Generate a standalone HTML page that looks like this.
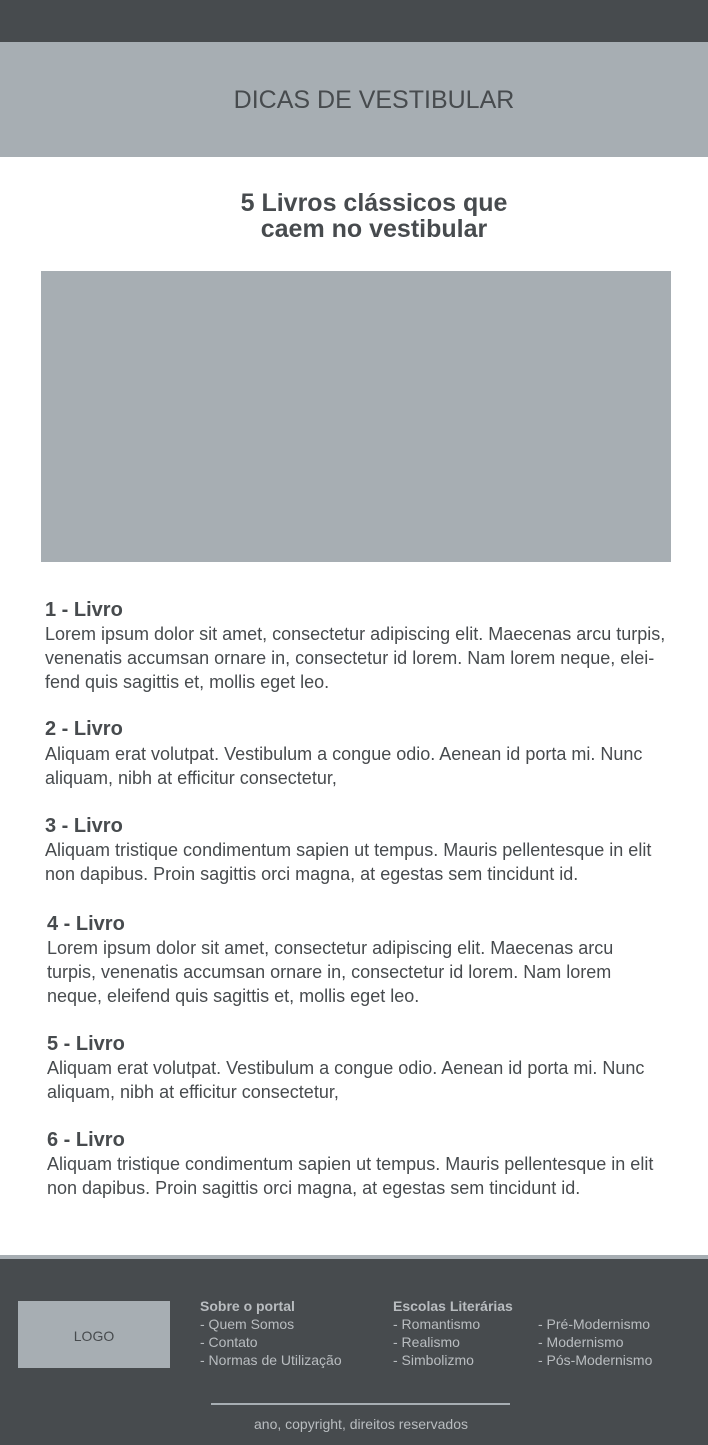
<!DOCTYPE html>
<html><head><meta charset="utf-8"><style>
*{margin:0;padding:0;box-sizing:border-box}
body{width:708px;height:1445px;position:relative;background:#fff;font-family:"Liberation Sans",Arial,sans-serif;color:#474b4e;overflow:hidden}
.a{position:absolute;white-space:nowrap}
.h{font-size:20px;font-weight:bold;line-height:24px}
.p{font-size:18px;line-height:24px}
.f{font-size:14px;line-height:18px;color:#b9bdc0}
.fb{font-weight:bold}
</style></head><body>
<div class="a" style="left:0;top:0;width:708px;height:42px;background:#474b4e"></div>
<div class="a" style="left:0;top:42px;width:708px;height:115px;background:#a7aeb3"></div>
<div class="a" style="left:0;width:748px;top:86px;font-size:25px;line-height:28px;text-align:center">DICAS DE VESTIBULAR</div>
<div class="a" style="left:0;width:748px;top:190px;font-size:25px;font-weight:bold;line-height:26px;text-align:center">5 Livros clássicos que<br>caem no vestibular</div>
<div class="a" style="left:41px;top:271px;width:630px;height:291px;background:#a7aeb3"></div>

<div class="a h" style="left:45px;top:598px">1 - Livro</div>
<div class="a p" style="left:45px;top:622px">Lorem ipsum dolor sit amet, consectetur adipiscing elit. Maecenas arcu turpis,<br>venenatis accumsan ornare in, consectetur id lorem. Nam lorem neque, elei-<br>fend quis sagittis et, mollis eget leo.</div>

<div class="a h" style="left:45px;top:717px">2 - Livro</div>
<div class="a p" style="left:45px;top:742px">Aliquam erat volutpat. Vestibulum a congue odio. Aenean id porta mi. Nunc<br>aliquam, nibh at efficitur consectetur,</div>

<div class="a h" style="left:45px;top:814px">3 - Livro</div>
<div class="a p" style="left:45px;top:838px">Aliquam tristique condimentum sapien ut tempus. Mauris pellentesque in elit<br>non dapibus. Proin sagittis orci magna, at egestas sem tincidunt id.</div>

<div class="a h" style="left:47px;top:912px">4 - Livro</div>
<div class="a p" style="left:47px;top:936px">Lorem ipsum dolor sit amet, consectetur adipiscing elit. Maecenas arcu<br>turpis, venenatis accumsan ornare in, consectetur id lorem. Nam lorem<br>neque, eleifend quis sagittis et, mollis eget leo.</div>

<div class="a h" style="left:47px;top:1032px">5 - Livro</div>
<div class="a p" style="left:47px;top:1056px">Aliquam erat volutpat. Vestibulum a congue odio. Aenean id porta mi. Nunc<br>aliquam, nibh at efficitur consectetur,</div>

<div class="a h" style="left:47px;top:1128px">6 - Livro</div>
<div class="a p" style="left:47px;top:1152px">Aliquam tristique condimentum sapien ut tempus. Mauris pellentesque in elit<br>non dapibus. Proin sagittis orci magna, at egestas sem tincidunt id.</div>

<div class="a" style="left:0;top:1255px;width:708px;height:4px;background:#a7aeb3"></div>
<div class="a" style="left:0;top:1259px;width:708px;height:186px;background:#474b4e"></div>
<div class="a" style="left:18px;top:1301px;width:152px;height:67px;background:#a7aeb3;font-size:14px;line-height:70px;text-align:center;color:#474b4e">LOGO</div>
<div class="a f" style="left:200px;top:1297px"><span class="fb">Sobre o portal</span><br>- Quem Somos<br>- Contato<br>- Normas de Utilização</div>
<div class="a f" style="left:393px;top:1297px"><span class="fb">Escolas Literárias</span><br>- Romantismo<br>- Realismo<br>- Simbolizmo</div>
<div class="a f" style="left:538px;top:1315px">- Pré-Modernismo<br>- Modernismo<br>- Pós-Modernismo</div>
<div class="a" style="left:211px;top:1403px;width:299px;height:2px;background:#a7aeb3"></div>
<div class="a f" style="left:0;width:722px;top:1415px;text-align:center">ano, copyright, direitos reservados</div>
</body></html>
